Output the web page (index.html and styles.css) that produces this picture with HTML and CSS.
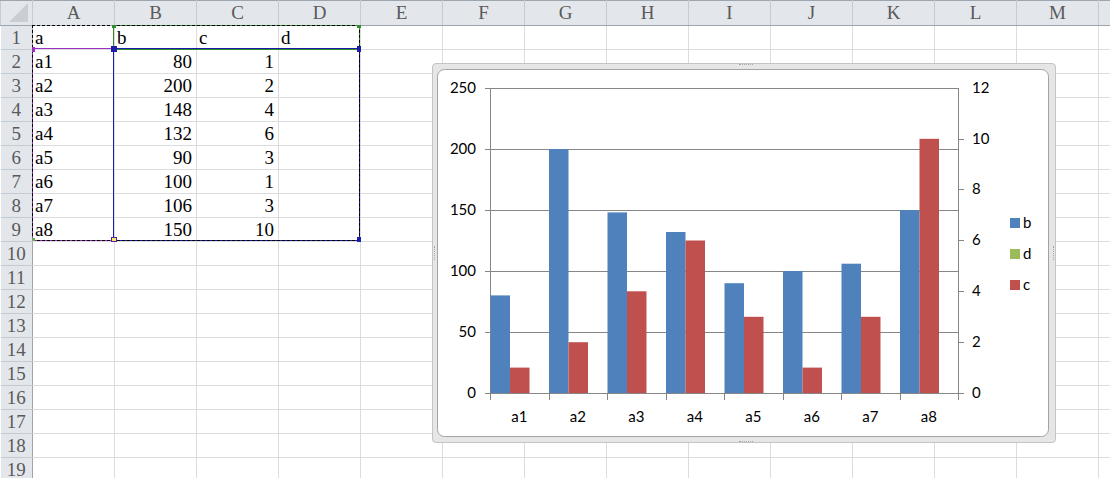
FILE: index.html
```html
<!DOCTYPE html>
<html>
<head>
<meta charset="utf-8">
<link rel="stylesheet" href="styles.css">
</head>
<body>
<div class="sheet">
  <table class="grid">
    <colgroup>
      <col class="rh"><col class="c"><col class="c"><col class="c"><col class="c"><col class="c"><col class="c"><col class="c"><col class="c"><col class="c"><col class="c"><col class="c"><col class="c"><col class="c"><col class="rest">
    </colgroup>
    <thead>
      <tr><th class="corner"></th><th>A</th><th>B</th><th>C</th><th>D</th><th>E</th><th>F</th><th>G</th><th>H</th><th>I</th><th>J</th><th>K</th><th>L</th><th>M</th><th></th></tr>
    </thead>
    <tbody>
      <tr><th>1</th><td>a</td><td>b</td><td>c</td><td>d</td><td></td><td></td><td></td><td></td><td></td><td></td><td></td><td></td><td></td><td></td></tr>
      <tr><th>2</th><td>a1</td><td class="n">80</td><td class="n">1</td><td></td><td></td><td></td><td></td><td></td><td></td><td></td><td></td><td></td><td></td><td></td></tr>
      <tr><th>3</th><td>a2</td><td class="n">200</td><td class="n">2</td><td></td><td></td><td></td><td></td><td></td><td></td><td></td><td></td><td></td><td></td><td></td></tr>
      <tr><th>4</th><td>a3</td><td class="n">148</td><td class="n">4</td><td></td><td></td><td></td><td></td><td></td><td></td><td></td><td></td><td></td><td></td><td></td></tr>
      <tr><th>5</th><td>a4</td><td class="n">132</td><td class="n">6</td><td></td><td></td><td></td><td></td><td></td><td></td><td></td><td></td><td></td><td></td><td></td></tr>
      <tr><th>6</th><td>a5</td><td class="n">90</td><td class="n">3</td><td></td><td></td><td></td><td></td><td></td><td></td><td></td><td></td><td></td><td></td><td></td></tr>
      <tr><th>7</th><td>a6</td><td class="n">100</td><td class="n">1</td><td></td><td></td><td></td><td></td><td></td><td></td><td></td><td></td><td></td><td></td><td></td></tr>
      <tr><th>8</th><td>a7</td><td class="n">106</td><td class="n">3</td><td></td><td></td><td></td><td></td><td></td><td></td><td></td><td></td><td></td><td></td><td></td></tr>
      <tr><th>9</th><td>a8</td><td class="n">150</td><td class="n">10</td><td></td><td></td><td></td><td></td><td></td><td></td><td></td><td></td><td></td><td></td><td></td></tr>
      <tr><th>10</th><td></td><td></td><td></td><td></td><td></td><td></td><td></td><td></td><td></td><td></td><td></td><td></td><td></td><td></td></tr>
      <tr><th>11</th><td></td><td></td><td></td><td></td><td></td><td></td><td></td><td></td><td></td><td></td><td></td><td></td><td></td><td></td></tr>
      <tr><th>12</th><td></td><td></td><td></td><td></td><td></td><td></td><td></td><td></td><td></td><td></td><td></td><td></td><td></td><td></td></tr>
      <tr><th>13</th><td></td><td></td><td></td><td></td><td></td><td></td><td></td><td></td><td></td><td></td><td></td><td></td><td></td><td></td></tr>
      <tr><th>14</th><td></td><td></td><td></td><td></td><td></td><td></td><td></td><td></td><td></td><td></td><td></td><td></td><td></td><td></td></tr>
      <tr><th>15</th><td></td><td></td><td></td><td></td><td></td><td></td><td></td><td></td><td></td><td></td><td></td><td></td><td></td><td></td></tr>
      <tr><th>16</th><td></td><td></td><td></td><td></td><td></td><td></td><td></td><td></td><td></td><td></td><td></td><td></td><td></td><td></td></tr>
      <tr><th>17</th><td></td><td></td><td></td><td></td><td></td><td></td><td></td><td></td><td></td><td></td><td></td><td></td><td></td><td></td></tr>
      <tr><th>18</th><td></td><td></td><td></td><td></td><td></td><td></td><td></td><td></td><td></td><td></td><td></td><td></td><td></td><td></td></tr>
      <tr><th>19</th><td></td><td></td><td></td><td></td><td></td><td></td><td></td><td></td><td></td><td></td><td></td><td></td><td></td><td></td></tr>
    </tbody>
  </table>

  <!-- chart data range highlights -->
  <div class="rng rng-green"></div>
  <div class="rng rng-purple"></div>
  <div class="rng rng-blue"></div>
  <div class="ants"></div>
  <span class="hdl hdl-g1"></span>
  <span class="hdl hdl-g2"></span>
  <span class="hdl hdl-p1"></span>
  <span class="hdl hdl-p2"></span>
  <span class="hdl hdl-b1"></span>
  <span class="hdl hdl-b2"></span>
  <span class="hdl hdl-b3"></span>
  <span class="hdl hdl-b4"></span>

  <div class="chart">
    <span class="grip grip-top"></span>
    <span class="grip grip-bottom"></span>
    <span class="grip grip-left"></span>
    <span class="grip grip-right"></span>
    <svg class="plot" width="624" height="380" viewBox="432 63 624 380" xmlns="http://www.w3.org/2000/svg">
      <rect x="437.5" y="69.5" width="611" height="367" rx="7" ry="7" fill="#ffffff" stroke="#a3a3a3"/>
      <g stroke="#868686" stroke-width="1" shape-rendering="crispEdges" fill="none">
        <line x1="485" y1="88.5" x2="958" y2="88.5"/>
        <line x1="485" y1="149.5" x2="958" y2="149.5"/>
        <line x1="485" y1="210.5" x2="958" y2="210.5"/>
        <line x1="485" y1="271.5" x2="958" y2="271.5"/>
        <line x1="485" y1="332.5" x2="958" y2="332.5"/>
        <line x1="485" y1="393.5" x2="964" y2="393.5"/>
        <line x1="490.5" y1="88" x2="490.5" y2="400"/>
        <line x1="958.5" y1="88" x2="958.5" y2="400"/>
        <line x1="549" y1="393" x2="549" y2="400"/>
        <line x1="607.5" y1="393" x2="607.5" y2="400"/>
        <line x1="666" y1="393" x2="666" y2="400"/>
        <line x1="724.5" y1="393" x2="724.5" y2="400"/>
        <line x1="783" y1="393" x2="783" y2="400"/>
        <line x1="841.5" y1="393" x2="841.5" y2="400"/>
        <line x1="900" y1="393" x2="900" y2="400"/>
        <line x1="958" y1="139.5" x2="964" y2="139.5"/>
        <line x1="958" y1="189.5" x2="964" y2="189.5"/>
        <line x1="958" y1="240.5" x2="964" y2="240.5"/>
        <line x1="958" y1="291.5" x2="964" y2="291.5"/>
        <line x1="958" y1="342.5" x2="964" y2="342.5"/>
      </g>
      <g fill="#4f81bd">
        <rect x="490.5" y="295.4" width="19.5" height="97.6"/>
        <rect x="549" y="149" width="19.5" height="244"/>
        <rect x="607.5" y="212.4" width="19.5" height="180.6"/>
        <rect x="666" y="232" width="19.5" height="161"/>
        <rect x="724.5" y="283.2" width="19.5" height="109.8"/>
        <rect x="783" y="271" width="19.5" height="122"/>
        <rect x="841.5" y="263.7" width="19.5" height="129.3"/>
        <rect x="900" y="210" width="19.5" height="183"/>
      </g>
      <g fill="#c0504d">
        <rect x="510" y="367.6" width="19.5" height="25.4"/>
        <rect x="568.5" y="342.2" width="19.5" height="50.8"/>
        <rect x="627" y="291.3" width="19.5" height="101.7"/>
        <rect x="685.5" y="240.5" width="19.5" height="152.5"/>
        <rect x="744" y="316.8" width="19.5" height="76.2"/>
        <rect x="802.5" y="367.6" width="19.5" height="25.4"/>
        <rect x="861" y="316.8" width="19.5" height="76.2"/>
        <rect x="919.5" y="138.8" width="19.5" height="254.2"/>
      </g>
      <g class="lbl" text-anchor="end">
        <text x="476" y="93">250</text>
        <text x="476" y="154">200</text>
        <text x="476" y="215">150</text>
        <text x="476" y="276">100</text>
        <text x="476" y="337">50</text>
        <text x="476" y="398">0</text>
      </g>
      <g class="lbl" text-anchor="start">
        <text x="972" y="93">12</text>
        <text x="972" y="144">10</text>
        <text x="972" y="194">8</text>
        <text x="972" y="245">6</text>
        <text x="972" y="296">4</text>
        <text x="972" y="347">2</text>
        <text x="972" y="398">0</text>
      </g>
      <g class="lbl" text-anchor="middle">
        <text x="519.3" y="422">a1</text>
        <text x="577.8" y="422">a2</text>
        <text x="636.3" y="422">a3</text>
        <text x="694.8" y="422">a4</text>
        <text x="753.3" y="422">a5</text>
        <text x="811.8" y="422">a6</text>
        <text x="870.3" y="422">a7</text>
        <text x="928.8" y="422">a8</text>
      </g>
      <rect x="1010" y="218" width="10" height="10" fill="#4f81bd"/>
      <rect x="1010" y="249" width="10" height="10" fill="#9bbb59"/>
      <rect x="1010" y="280" width="10" height="10" fill="#c0504d"/>
      <g class="lbl" text-anchor="start">
        <text x="1023" y="228">b</text>
        <text x="1023" y="259">d</text>
        <text x="1023" y="290">c</text>
      </g>
    </svg>
  </div>
</div>
</body>
</html>
```

FILE: styles.css
```css
html, body {
  margin: 0;
  padding: 0;
  background: #ffffff;
  overflow: hidden;
}

.sheet {
  position: relative;
  width: 1110px;
  height: 478px;
  overflow: hidden;
  font-family: "Liberation Serif", "Times New Roman", serif;
  font-size: 19px;
  color: #000000;
}

.grid {
  border-collapse: collapse;
  table-layout: fixed;
  width: 1110px;
}

col.rh { width: 32px; }
col.c { width: 82px; }
col.rest { width: 12px; }

.grid thead tr { height: 25px; }
.grid tbody tr { height: 24px; }

.grid th {
  background: #e3e7ec;
  color: #5a5a5a;
  font-weight: normal;
  padding: 0;
  text-align: center;
  line-height: 22px;
  border: 1px solid #c5cbd2;
}

.grid thead th {
  border-top-color: #9da5ae;
  border-bottom-color: #9da5ae;
}

.grid tbody th {
  border-right-color: #9da5ae;
  border-left: 0;
}

.grid th.corner {
  position: relative;
}

.grid th.corner::after {
  content: "";
  position: absolute;
  right: 4px;
  bottom: 3px;
  width: 19px;
  height: 19px;
  background: #c9ced4;
  clip-path: polygon(100% 0, 100% 100%, 0 100%);
}

.grid td {
  border: 1px solid #dadcdd;
  padding: 0 4px 0 2px;
  white-space: nowrap;
  overflow: hidden;
  line-height: 22px;
}

.grid td.n { text-align: right; }

/* range highlights for chart source data */
.rng {
  position: absolute;
  box-sizing: border-box;
  border: 1px solid;
}

.rng-green {
  left: 113px; top: 25px; width: 247px; height: 25px;
  border-color: #2e8b2e;
}

.rng-purple {
  left: 32px; top: 48px; width: 82px; height: 193px;
  border-color: #9b30c0;
}

.rng-blue {
  left: 113px; top: 48px; width: 247px; height: 193px;
  border-color: #1c1ca8;
}

.ants {
  position: absolute;
  box-sizing: border-box;
  left: 32px; top: 25px; width: 328px; height: 216px;
  border: 1px dashed #000000;
}

.hdl {
  position: absolute;
  width: 5px;
  height: 5px;
  box-sizing: border-box;
}
.hdl-g1 { left: 112px; top: 25px; width: 4px; height: 3px; background: #2e8b2e; }
.hdl-g2 { left: 357px; top: 25px; width: 4px; height: 3px; background: #2e8b2e; }
.hdl-p1 { left: 32px; top: 47px; width: 3px; background: #9b30c0; }
.hdl-p2 { left: 32px; top: 238px; width: 3px; height: 3px; background: #6ab04c; }
.hdl-b1 { left: 111px; top: 46px; width: 6px; height: 6px; background: #1c1ca8; }
.hdl-b2 { left: 357px; top: 46px; width: 4px; height: 6px; background: #1c1ca8; }
.hdl-b3 { left: 111px; top: 237px; width: 6px; height: 5px; border: 1px solid #5a1ca8; background: #f5e96a; }
.hdl-b4 { left: 357px; top: 237px; width: 4px; height: 5px; background: #1c1ca8; }

/* chart object */
.chart {
  position: absolute;
  left: 432px;
  top: 63px;
  width: 624px;
  height: 380px;
  box-sizing: border-box;
  background: #e6e6e6;
  border: 1px solid #c4c4c4;
  border-radius: 4px;
}

.plot {
  position: absolute;
  left: -1px;
  top: -1px;
  display: block;
}

.lbl {
  font-family: Lato, "Liberation Sans", Arial, sans-serif;
  font-size: 15px;
  fill: #000000;
}

.grip {
  position: absolute;
  z-index: 2;
  border-color: #a8a8a8;
  border-style: dotted;
  border-width: 0;
}
.grip-top { left: 306px; top: 0px; width: 14px; height: 0; border-top-width: 1px; }
.grip-bottom { left: 306px; bottom: 0px; width: 14px; height: 0; border-bottom-width: 1px; }
.grip-left { left: 1px; top: 182px; width: 0; height: 14px; border-left-width: 1px; }
.grip-right { right: 1px; top: 182px; width: 0; height: 14px; border-right-width: 1px; }
```
